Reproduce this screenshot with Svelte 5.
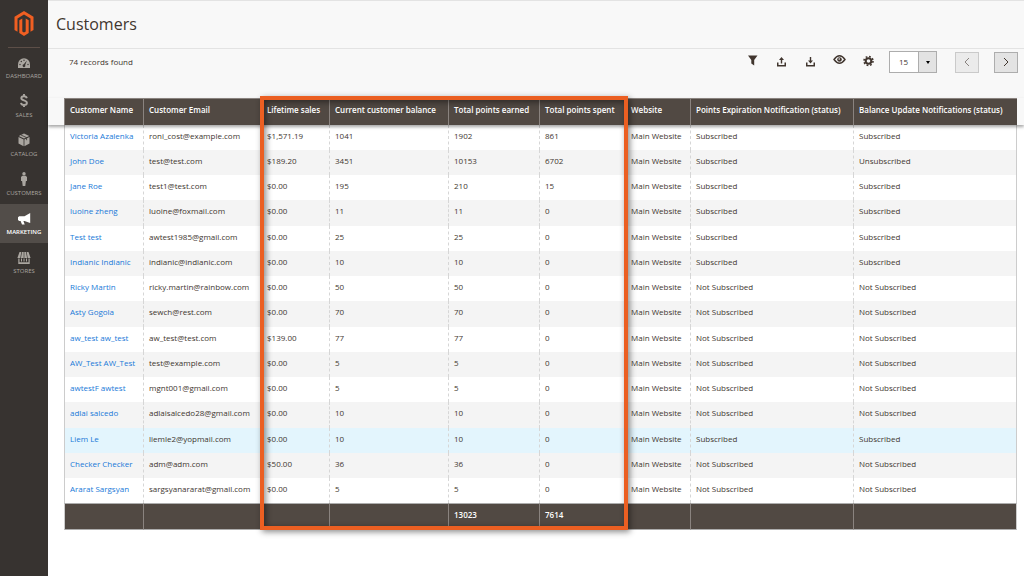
<script lang="ts">
	interface Customer {
		name: string;
		email: string;
		sales: string;
		balance: number;
		earned: number;
		spent: number;
		expiration: string;
		update: string;
		highlighted?: boolean;
	}

	const columns = [
		{ label: 'Customer Name', width: 79 },
		{ label: 'Customer Email', width: 119 },
		{ label: 'Lifetime sales', width: 67 },
		{ label: 'Current customer balance', width: 119 },
		{ label: 'Total points earned', width: 91 },
		{ label: 'Total points spent', width: 87 },
		{ label: 'Website', width: 64 },
		{ label: 'Points Expiration Notification (status)', width: 163 },
		{ label: 'Balance Update Notifications (status)', width: 164 }
	];

	// The frame runs from "Lifetime sales" to "Total points spent"
	const frameFrom = 2;
	const frameTo = 6;

	const sum = (cols: typeof columns) => cols.reduce((total, c) => total + c.width, 0);
	const tableWidth = sum(columns);
	const frameLeft = (sum(columns.slice(0, frameFrom)) / tableWidth) * 100;
	const frameWidth = (sum(columns.slice(frameFrom, frameTo)) / tableWidth) * 100;

	const yes = 'Subscribed';
	const no = 'Not Subscribed';

	const customers: Customer[] = [
		{ name: 'Victoria Azalenka', email: 'roni_cost@example.com', sales: '$1,571.19', balance: 1041, earned: 1902, spent: 861, expiration: yes, update: yes },
		{ name: 'John Doe', email: 'test@test.com', sales: '$189.20', balance: 3451, earned: 10153, spent: 6702, expiration: yes, update: 'Unsubscribed' },
		{ name: 'Jane Roe', email: 'test1@test.com', sales: '$0.00', balance: 195, earned: 210, spent: 15, expiration: yes, update: yes },
		{ name: 'luoine zheng', email: 'luoine@foxmail.com', sales: '$0.00', balance: 11, earned: 11, spent: 0, expiration: yes, update: yes },
		{ name: 'Test test', email: 'awtest1985@gmail.com', sales: '$0.00', balance: 25, earned: 25, spent: 0, expiration: yes, update: yes },
		{ name: 'Indianic Indianic', email: 'indianic@indianic.com', sales: '$0.00', balance: 10, earned: 10, spent: 0, expiration: yes, update: yes },
		{ name: 'Ricky Martin', email: 'ricky.martin@rainbow.com', sales: '$0.00', balance: 50, earned: 50, spent: 0, expiration: no, update: no },
		{ name: 'Asty Gogola', email: 'sewch@rest.com', sales: '$0.00', balance: 70, earned: 70, spent: 0, expiration: no, update: no },
		{ name: 'aw_test aw_test', email: 'aw_test@test.com', sales: '$139.00', balance: 77, earned: 77, spent: 0, expiration: no, update: no },
		{ name: 'AW_Test AW_Test', email: 'test@example.com', sales: '$0.00', balance: 5, earned: 5, spent: 0, expiration: no, update: no },
		{ name: 'awtestF awtest', email: 'mgnt001@gmail.com', sales: '$0.00', balance: 5, earned: 5, spent: 0, expiration: no, update: no },
		{ name: 'adlai salcedo', email: 'adlaisalcedo28@gmail.com', sales: '$0.00', balance: 10, earned: 10, spent: 0, expiration: no, update: no },
		{ name: 'Liem Le', email: 'liemle2@yopmail.com', sales: '$0.00', balance: 10, earned: 10, spent: 0, expiration: yes, update: yes, highlighted: true },
		{ name: 'Checker Checker', email: 'adm@adm.com', sales: '$50.00', balance: 36, earned: 36, spent: 0, expiration: no, update: no },
		{ name: 'Ararat Sargsyan', email: 'sargsyanararat@gmail.com', sales: '$0.00', balance: 5, earned: 5, spent: 0, expiration: no, update: no }
	];

	const menu = ['Dashboard', 'Sales', 'Catalog', 'Customers', 'Marketing', 'Stores'];
	const active = 'Marketing';

	let pageSize = $state('15');
</script>

<div class="admin">
	<aside class="sidebar">
		<a class="sidebar-logo" href="#home" aria-label="Magento">
			<svg width="20" height="26" viewBox="0 0 20 26" fill="#f05f22">
				<path d="M10 0 19.500 5.700V19L16.500 20.700V7.500L10 3.600 3.500 7.500V20.700L.5 19V5.700Z" />
				<path d="M5.300 9.200 8.300 7.500V20.500L10 21.500 11.700 20.500V7.500L14.700 9.200V22L10 25 5.300 22Z" />
			</svg>
		</a>
		<nav class="sidebar-nav">
			{#each menu as item (item)}
				<a class="sidebar-item" class:sidebar-item-active={item === active} href="#{item.toLowerCase()}">
					<svg width="14" height="14" viewBox="0 0 14 14" fill="currentColor">
						{#if item === 'Dashboard'}
							<path d="M1 13V9.200a6 6 0 0 1 12 0V13Z" />
							<g fill="#373330">
								<circle cx="3" cy="9.500" r=".7" />
								<circle cx="4.300" cy="6.500" r=".7" />
								<circle cx="7" cy="5.200" r=".7" />
								<circle cx="11" cy="9.500" r=".7" />
								<path d="M9.900 5.500 8.200 10a1.400 1.400 0 1 1-1.400-.7Z" />
							</g>
						{:else if item === 'Sales'}
							<path
								d="M9.800 4.300C9.500 2.900 8.500 2.200 7 2.200S4.300 3 4.300 4.300C4.300 7 9.900 5.900 9.900 8.900c0 1.400-1.200 2.100-2.900 2.100S4.200 10.200 4 8.800M7 0v2.500M7 10.800V13"
								fill="none"
								stroke="currentColor"
								stroke-width="1.900"
							/>
						{:else if item === 'Catalog'}
							<path d="M7 .5 12.200 3 7 5.500 1.800 3ZM1.500 4.100 6.600 6.600V13.300L1.500 10.500ZM12.500 4.100 7.400 6.600V13.300l5.100-2.800Z" />
							<path d="M4 2 9.600 4.600V7.200" fill="none" stroke="#373330" stroke-width=".8" />
						{:else if item === 'Customers'}
							<circle cx="7" cy="1.700" r="1.700" />
							<path d="M5.300 3.700h3.400L10 5v4H8.900l-.6 5H5.700L5.100 9H4V5Z" />
						{:else if item === 'Marketing'}
							<path d="M13.200 2v10L7.500 10H6.400l1.300 3.400H5L3.600 10H2.200L1 8.900V6.200l1.200-1h5.300Z" />
						{:else}
							<path d="M2.500 2h1.800L3.300 8H.4ZM5 2h1.700v6H3.900ZM7.300 2H9l1.100 6H7.300ZM9.700 2h1.800l2.100 6h-2.900Z" />
							<path d="M1.300 8.600h1.200v3.600h9V8.600h1.200V14H1.300ZM4 8.600h1v2.800H4ZM6.500 8.600h1v2.800h-1ZM9 8.600h1v2.800H9Z" />
						{/if}
					</svg>
					<span>{item}</span>
				</a>
			{/each}
		</nav>
	</aside>

	<main class="content">
		<header class="page-header">
			<h1>Customers</h1>
		</header>

		<div class="toolbar">
			<p class="toolbar-count">74 records found</p>
			<div class="toolbar-actions">
				<button class="toolbar-icon" type="button" aria-label="Filters">
					<svg width="13" height="13" viewBox="0 0 13 13" fill="currentColor">
						<path d="M2 1.500h9.500L8.200 6v5.500L5.300 9.500V6Z" />
					</svg>
				</button>
				<button class="toolbar-icon" type="button" aria-label="Export">
					<svg width="13" height="13" viewBox="0 0 13 13" fill="currentColor">
						<path d="M6.500 3 9 6H7.200V9.500H5.800V6H4Z" />
						<path d="M2 8.500h1.500V11h6V8.500H11v4H2Z" />
					</svg>
				</button>
				<button class="toolbar-icon" type="button" aria-label="Import">
					<svg width="13" height="13" viewBox="0 0 13 13" fill="currentColor">
						<path d="M6.500 9.500 9 6.500H7.200V3H5.800v3.500H4Z" />
						<path d="M2 8.500h1.500V11h6V8.500H11v4H2Z" />
					</svg>
				</button>
				<button class="toolbar-icon" type="button" aria-label="View">
					<svg width="13" height="13" viewBox="0 0 13 13">
						<path
							d="M1 5.500Q6.500-2 12 5.500 6.500 13 1 5.500Z"
							fill="none"
							stroke="currentColor"
							stroke-width="1.400"
						/>
						<circle cx="6.500" cy="5.500" r="2.300" fill="currentColor" />
						<circle cx="6.200" cy="5" r=".8" fill="#f8f8f8" />
					</svg>
				</button>
				<button class="toolbar-icon" type="button" aria-label="Columns">
					<svg width="13" height="13" viewBox="0 0 13 13" fill="none" stroke="currentColor">
						<circle cx="6.500" cy="7" r="2.800" stroke-width="2" />
						<circle cx="6.500" cy="7" r="4.500" stroke-width="1.600" stroke-dasharray="1.770 1.765" />
					</svg>
				</button>
				<div class="toolbar-size">
					<select aria-label="Per page" bind:value={pageSize}>
						<option>15</option>
						<option>20</option>
						<option>30</option>
						<option>50</option>
					</select>
					<span class="toolbar-size-arrow"></span>
				</div>
				<button class="toolbar-page" type="button" aria-label="Previous page" disabled>
					<svg width="8" height="10" viewBox="0 0 8 10"><path d="M6 1 2 5l4 4" /></svg>
				</button>
				<button class="toolbar-page" type="button" aria-label="Next page">
					<svg width="8" height="10" viewBox="0 0 8 10"><path d="M2 1l4 4-4 4" /></svg>
				</button>
			</div>
		</div>

		<div class="grid">
			<div class="grid-inner">
				<table>
					<colgroup>
						{#each columns as column (column.label)}
							<col style="width: {column.width}px" />
						{/each}
					</colgroup>
					<thead>
						<tr>
							{#each columns as column (column.label)}
								<th scope="col">{column.label}</th>
							{/each}
						</tr>
					</thead>
					<tbody>
						{#each customers as customer (customer.email)}
							<tr class:highlighted={customer.highlighted}>
								<td><a href="#customer">{customer.name}</a></td>
								<td>{customer.email}</td>
								<td>{customer.sales}</td>
								<td>{customer.balance}</td>
								<td>{customer.earned}</td>
								<td>{customer.spent}</td>
								<td>Main Website</td>
								<td>{customer.expiration}</td>
								<td>{customer.update}</td>
							</tr>
						{/each}
					</tbody>
					<tfoot>
						<tr>
							<td></td>
							<td></td>
							<td></td>
							<td></td>
							<td>13023</td>
							<td>7614</td>
							<td></td>
							<td></td>
							<td></td>
						</tr>
					</tfoot>
				</table>
				<div class="grid-frame" style="left: {frameLeft}%; width: {frameWidth}%"></div>
			</div>
		</div>
	</main>
</div>

<style>
	:global(body) {
		background: #fff;
	}

	.admin {
		display: flex;
		min-height: 100vh;
		font-family: 'Open Sans', 'Noto Sans', sans-serif;
		font-size: 8px;
		line-height: 12px;
		color: #41362f;
	}

	.sidebar {
		flex: 0 0 48px;
		background: #373330;
	}

	.sidebar-logo {
		display: flex;
		justify-content: center;
		box-sizing: border-box;
		height: 48px;
		margin: 0 8px;
		padding-top: 11px;
		border-bottom: 1px solid #5d4f48;
	}

	.sidebar-nav {
		display: flex;
		flex-direction: column;
	}

	.sidebar-item {
		display: flex;
		flex-direction: column;
		align-items: center;
		gap: 2px;
		box-sizing: border-box;
		height: 39px;
		padding-top: 7px;
		font-size: 6px;
		line-height: 10px;
		text-transform: uppercase;
		text-decoration: none;
		color: #aaa6a0;
	}

	.sidebar-item-active {
		background: #524d49;
		color: #fff;
		font-weight: 600;
	}

	.content {
		flex: 1;
		min-width: 0;
	}

	.page-header {
		box-sizing: border-box;
		height: 49px;
		padding: 11px 8px;
		background: #f8f8f8;
		border-top: 1px solid #e3e3e3;
		border-bottom: 1px solid #e3e3e3;
	}

	h1 {
		margin: 0;
		font-size: 16px;
		line-height: 24px;
		font-weight: 400;
	}

	.toolbar {
		display: flex;
		justify-content: space-between;
		align-items: flex-start;
		box-sizing: border-box;
		height: 49px;
		padding: 2px 6px 0 21px;
		background: #f8f8f8;
	}

	.toolbar-count {
		margin: 0;
		line-height: 22px;
	}

	.toolbar-actions {
		display: flex;
		align-items: center;
	}

	.toolbar-icon {
		width: 13px;
		height: 22px;
		margin-right: 16px;
		padding: 0;
		border: 0;
		background: none;
		color: #41362f;
	}

	.toolbar-icon:last-of-type {
		margin-right: 0;
	}

	.toolbar-size {
		position: relative;
		width: 48px;
		margin-left: -2px;
		margin-right: 18px;
	}

	.toolbar-size select {
		display: block;
		appearance: none;
		width: 100%;
		height: 22px;
		padding: 0 9px;
		border: 1px solid #adadad;
		border-radius: 0;
		background: #fff;
		font: inherit;
		color: inherit;
	}

	.toolbar-size-arrow {
		position: absolute;
		top: 1px;
		right: 1px;
		display: flex;
		align-items: center;
		justify-content: center;
		width: 17px;
		height: 20px;
		border-left: 1px solid #adadad;
		background: #e3e3e3;
		pointer-events: none;
	}

	.toolbar-size-arrow::after {
		content: '';
		border: 2px solid transparent;
		border-top: 3px solid #000;
		border-bottom: 0;
	}

	.toolbar-page {
		display: flex;
		align-items: center;
		justify-content: center;
		width: 24px;
		height: 21px;
		padding: 0;
		border: 1px solid #adadad;
		background: #e3e3e3;
		color: #41362f;
	}

	.toolbar-page + .toolbar-page {
		margin-left: 15px;
	}

	.toolbar-page:disabled {
		opacity: 0.6;
	}

	.toolbar-page path {
		fill: none;
		stroke: currentColor;
	}

	.grid {
		position: relative;
		padding: 0 7px 0 16px;
	}

	/* Backdrop of the header row, casts its shadow over the first row */
	.grid::before {
		content: '';
		position: absolute;
		z-index: 1;
		top: 0;
		left: 0;
		right: 0;
		height: 27px;
		background: #f8f8f8;
		box-shadow: 0 2px 3px rgba(0, 0, 0, 0.35);
	}

	.grid-inner {
		position: relative;
	}

	table {
		width: 100%;
		table-layout: fixed;
		border-collapse: separate;
		border-spacing: 0;
	}

	thead {
		position: relative;
		z-index: 2;
	}

	th,
	td {
		box-sizing: border-box;
		height: 25px;
		padding: 0 0 4px 5px;
		border-left: 1px dashed #d6d6d6;
		text-align: left;
		white-space: nowrap;
	}

	th {
		height: 27px;
		border-top: 1px solid #8a837f;
		border-left: 1px solid #8a837f;
		background: #514943;
		font-weight: 600;
		color: #fff;
	}

	td:first-child {
		border-left: 1px solid #ccc;
	}

	td:last-child {
		border-right: 1px solid #ccc;
	}

	th:nth-child(3),
	td:nth-child(3),
	th:nth-child(7),
	td:nth-child(7) {
		border-left: 0;
	}

	tbody tr:nth-child(even) {
		background: #f4f4f4;
	}

	tbody tr:nth-child(4n) td {
		height: 26px;
	}

	tbody .highlighted {
		background: #e3f5fd;
	}

	tbody a {
		color: #1979d8;
		text-decoration: none;
	}

	tfoot td {
		height: 27px;
		border-top: 1px solid #adadad;
		border-bottom: 1px solid #adadad;
		border-left: 1px solid #8a837f;
		background: #514943;
		font-weight: 600;
		color: #fff;
	}

	.grid-frame {
		position: absolute;
		z-index: 3;
		top: -2px;
		bottom: 0;
		pointer-events: none;
	}

	.grid-frame::before {
		content: '';
		position: absolute;
		inset: 0 -2px;
		border: 4px solid #eb5f22;
		box-shadow:
			2px 2px 6px rgba(0, 0, 0, 0.45),
			inset 2px 2px 6px rgba(0, 0, 0, 0.45);
	}
</style>
